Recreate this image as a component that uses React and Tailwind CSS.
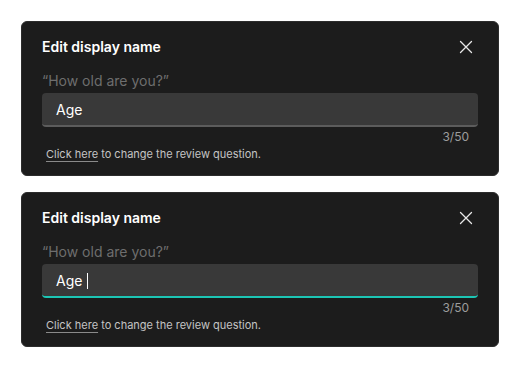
import React from "react";

function Card({ focused }) {
  return (
    <div className="w-[478px] h-[155px] rounded-[6px] bg-[#1c1c1c] border border-[#2c2c2c] px-[20px] pt-[15px] flex flex-col">
      <div className="flex items-center justify-between h-[20px]">
        <div className="text-[14px] leading-[20px] font-semibold text-white">Edit display name</div>
        <svg width="14" height="14" viewBox="0 0 14 14" className="mr-[5px]">
          <path d="M1.5 1.5 L12.5 12.5 M12.5 1.5 L1.5 12.5" stroke="#e8e8e8" strokeWidth="1.3" strokeLinecap="round" />
        </svg>
      </div>
      <div className="mt-[14px] text-[14px] leading-[20px] text-[#6e6e6e]">“How old are you?”</div>
      <div
        className={
          "mt-[2px] h-[34px] rounded-[4px] bg-[#393939] flex items-center pl-[14px] pt-[2px] border-b-2 " +
          (focused ? "border-[#1cc5b4]" : "border-[#5c5c5c]")
        }
      >
        <span className="text-[14px] leading-[20px] text-white">Age</span>
        {focused && <span className="ml-[5px] w-px h-[16px] bg-white" />}
      </div>
      <div className="mt-[2px] text-right pr-[9px] text-[12px] leading-[16px] text-[#9c9c9c]">3/50</div>
      <div className="mt-[1px] pl-[4px] text-[11px] leading-[16px] text-[#c4c4c4]">
        <span className="underline decoration-[#8a8a8a] underline-offset-[3px]">Click here</span> to change the review question.
      </div>
    </div>
  );
}

export default function App() {
  return (
    <div
      className="w-[520px] h-[367px] bg-white pt-[21px] pl-[21px] flex flex-col gap-[16px]"
      style={{ fontFamily: "Inter, 'Noto Sans', sans-serif" }}
    >
      <Card focused={false} />
      <Card focused={true} />
    </div>
  );
}
